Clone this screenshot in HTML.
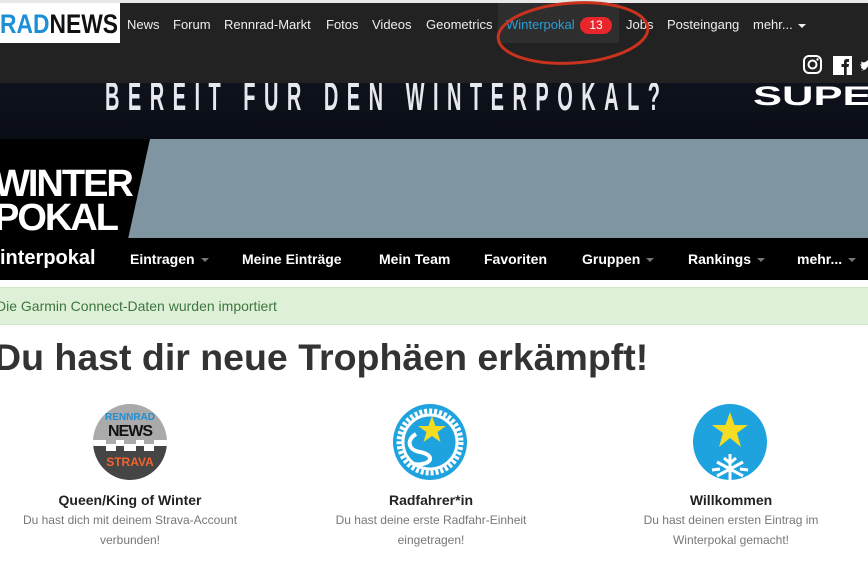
<!DOCTYPE html>
<html><head><meta charset="utf-8"><style>
*{margin:0;padding:0;box-sizing:border-box}
body{width:868px;height:578px;overflow:hidden;background:#fff;font-family:"Liberation Sans",Arial,sans-serif;position:relative}
.a{position:absolute;white-space:nowrap}
.nav{color:#eee;font-size:13px;top:17px}
.nav2{color:#fff;font-size:14px;font-weight:bold;top:251px}
.car{display:inline-block;width:0;height:0;border-left:4px solid transparent;border-right:4px solid transparent;border-top:4px solid #777;vertical-align:middle;margin-left:6px}
.t{font-size:14px;font-weight:bold;color:#222;top:492px;width:300px;text-align:center}
.d{font-size:12px;color:#777;top:510px;width:300px;text-align:center;line-height:20px;white-space:normal}
</style></head><body>
<div class="a" style="left:0;top:0;width:868px;height:3px;background:#e8e8e8"></div>
<div class="a" style="left:0;top:3px;width:868px;height:80px;background:#222"></div>
<div class="a" style="left:0;top:3px;width:120px;height:40px;background:#fff"></div>
<svg class="a" style="left:0;top:3px" width="120" height="40"><text x="0" y="30" textLength="118" lengthAdjust="spacingAndGlyphs" font-size="27" font-weight="bold" font-family="Liberation Sans,sans-serif"><tspan fill="#1d8fd6">RAD</tspan><tspan fill="#111">NEWS</tspan></text></svg>
<div class="a" style="left:498px;top:3px;width:121px;height:40px;background:#2e2e2e"></div>
<div class="a nav" style="left:127px">News</div>
<div class="a nav" style="left:173px">Forum</div>
<div class="a nav" style="left:224px">Rennrad-Markt</div>
<div class="a nav" style="left:326px">Fotos</div>
<div class="a nav" style="left:372px">Videos</div>
<div class="a nav" style="left:426px">Geometrics</div>
<div class="a nav" style="left:506px;color:#2a9fd8">Winterpokal</div>
<div class="a" style="left:580px;top:17px;width:32px;height:17px;border-radius:9px;background:#e8262b;color:#fff;font-size:12px;text-align:center;line-height:17px">13</div>
<div class="a nav" style="left:626px">Jobs</div>
<div class="a nav" style="left:667px">Posteingang</div>
<div class="a nav" style="left:753px">mehr... <span class="car" style="border-top-color:#eee;margin-left:2px"></span></div>
<svg class="a" style="left:802px;top:54px" width="66" height="22" viewBox="0 0 66 22">
<rect x="2" y="2" width="17" height="17" rx="5" fill="none" stroke="#fff" stroke-width="2"/><circle cx="10.5" cy="10.5" r="4" fill="none" stroke="#fff" stroke-width="2"/><circle cx="15.5" cy="5.5" r="1.2" fill="#fff"/>
<rect x="31" y="2" width="19" height="19" fill="#fff"/><path d="M42 21v-8h-2.5v-3H42V8c0-2 1-3 3-3h2v3h-1.5c-.6 0-.8.3-.8.8V10h2.3l-.4 3h-1.9v8z" fill="#222"/>
<path d="M60 8c2 1 4 0 6-2v6c-2 4-5 5-7 4 2 0 3-1 3-1-2 0-3-1-3-2h1.5c-1 0-2-1-2-3 0 0 1 .5 1.5 .5-1 -1-1-2-.5-3z" fill="#fff"/>
</svg>
<svg class="a" style="left:496px;top:-2px" width="160" height="74"><ellipse cx="77" cy="35" rx="75" ry="30" fill="none" stroke="#c8321e" stroke-width="3" transform="rotate(-4 77 35)"/></svg>
<div class="a" style="left:0;top:83px;width:868px;height:56px;background:linear-gradient(#0e121c,#0a0d15)"></div>
<svg class="a" style="left:0;top:83px" width="868" height="56">
<g transform="scale(0.5,1)"><text x="210" y="27" textLength="1110" lengthAdjust="spacing" font-size="40" font-weight="bold" fill="#e6e8ee" font-family="Liberation Sans,sans-serif">BEREIT FÜR DEN WINTERPOKAL?</text></g>
<text x="753" y="22" textLength="150" lengthAdjust="spacingAndGlyphs" font-size="27" font-weight="bold" fill="#fff" font-family="Liberation Sans,sans-serif">SUPER</text>
</svg>
<div class="a" style="left:0;top:139px;width:868px;height:100px;background:#7f95a2"></div>
<svg class="a" style="left:0;top:139px" width="160" height="100"><polygon points="0,0 150,0 128,100 0,100" fill="#000"/></svg>
<div class="a" style="left:-6px;top:167px;color:#fff;font-size:38px;font-weight:bold;letter-spacing:-2px;line-height:34px">WINTER<br>POKAL</div>
<div class="a" style="left:0;top:238px;width:868px;height:42px;background:#000"></div>
<div class="a" style="left:0;top:247px;color:#fff;font-size:20px;font-weight:bold">interpokal</div>
<div class="a nav2" style="left:130px">Eintragen<span class="car"></span></div>
<div class="a nav2" style="left:242px">Meine Einträge</div>
<div class="a nav2" style="left:379px">Mein Team</div>
<div class="a nav2" style="left:484px">Favoriten</div>
<div class="a nav2" style="left:582px">Gruppen<span class="car"></span></div>
<div class="a nav2" style="left:688px">Rankings<span class="car"></span></div>
<div class="a nav2" style="left:797px">mehr...<span class="car"></span></div>
<div class="a" style="left:0;top:287px;width:868px;height:38px;background:#dff0d8;border-top:1px solid #d0e9c6;border-bottom:1px solid #d0e9c6"></div>
<div class="a" style="left:-4px;top:298px;font-size:14px;color:#3c763d">Die Garmin Connect-Daten wurden importiert</div>
<div class="a" style="left:-6px;top:336px;font-size:37.5px;font-weight:bold;color:#333">Du hast dir neue Trophäen erkämpft!</div>
<svg class="a" style="left:92px;top:404px" width="76" height="76" viewBox="0 0 76 76">
<defs><clipPath id="c1"><ellipse cx="38" cy="38" rx="37" ry="38"/></clipPath></defs>
<g clip-path="url(#c1)"><rect width="76" height="40" fill="#aaa"/><rect y="40" width="76" height="36" fill="#454545"/>
<path d="M0 36h14v4h10v-4h8v4h12v-4h8v4h10v-4h14v6h-14v5h-10v-5h-8v5h-12v-5h-8v5h-10v-5h-14z" fill="#fff"/></g>
<text x="38" y="16" text-anchor="middle" font-size="10" font-weight="bold" fill="#1d8fd6" font-family="Liberation Sans,sans-serif">RENNRAD</text>
<text x="38" y="32" text-anchor="middle" font-size="16" font-weight="bold" fill="#111" font-family="Liberation Sans,sans-serif" letter-spacing="-1">NEWS</text>
<text x="38" y="62" text-anchor="middle" font-size="12" font-weight="bold" fill="#f26430" font-family="Liberation Sans,sans-serif">STRAVA</text>
</svg>
<svg class="a" style="left:392px;top:404px" width="76" height="76" viewBox="0 0 76 76">
<ellipse cx="38" cy="38" rx="37" ry="38" fill="#1ea3df"/>
<circle cx="38" cy="38" r="31" fill="none" stroke="#fff" stroke-width="5" stroke-dasharray="3 2"/>
<circle cx="38" cy="38" r="27" fill="none" stroke="#fff" stroke-width="3"/>
<polygon points="40,12 43.5,22 54,22 45.5,28 48.5,38 40,32 31.5,38 34.5,28 26,22 36.5,22" fill="#f3dc22"/>
<path d="M24 30c-10 6-8 16 4 18 12 2 14 10 2 12-4 1-8 0-10-1" fill="none" stroke="#fff" stroke-width="4"/>
</svg>
<svg class="a" style="left:692px;top:404px" width="76" height="76" viewBox="0 0 76 76">
<ellipse cx="38" cy="38" rx="37" ry="38" fill="#1ea3df"/>
<polygon points="38,8 42.5,21 56,21 45,29 49,43 38,34 27,43 31,29 20,21 33.5,21" fill="#f3dc22"/>
<g stroke="#fff" stroke-width="3" fill="none"><path d="M38 50v26M25 58l26 14M51 58l-26 14M32 54l6 5 6-5M20 66l8 -1M56 66l-8-1"/></g>
</svg>
<div class="a t" style="left:-20px">Queen/King of Winter</div>
<div class="a d" style="left:-20px;padding:0 35px">Du hast dich mit deinem Strava-Account verbunden!</div>
<div class="a t" style="left:281px">Radfahrer*in</div>
<div class="a d" style="left:281px;padding:0 45px">Du hast deine erste Radfahr-Einheit eingetragen!</div>
<div class="a t" style="left:581px">Willkommen</div>
<div class="a d" style="left:581px;padding:0 50px">Du hast deinen ersten Eintrag im Winterpokal gemacht!</div>
</body></html>
